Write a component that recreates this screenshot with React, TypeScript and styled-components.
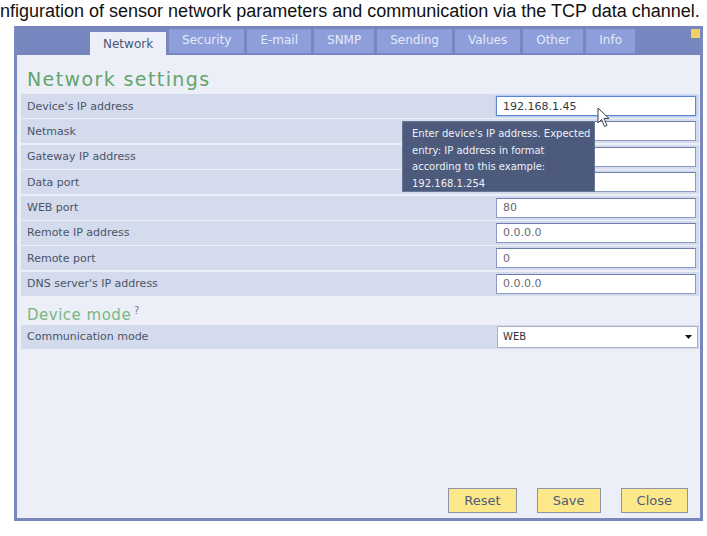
import styled, { createGlobalStyle } from "styled-components";

const GlobalStyle = createGlobalStyle`
  body {
    margin: 0;
    background: #ffffff;
  }
`;

const Page = styled.div`
  width: 707px;
  height: 536px;
  overflow: hidden;
`;

const Caption = styled.div`
  height: 26px;
  margin-left: -23px;
  box-sizing: border-box;
  font-family: "Liberation Sans", Arial, sans-serif;
  font-size: 18px;
  line-height: 22px;
  color: #111;
  white-space: nowrap;
`;

const Panel = styled.div`
  position: relative;
  margin-left: 14px;
  width: 689px;
  height: 495px;
  box-sizing: border-box;
  border: 3px solid #7b88bd;
  border-top: none;
  display: flex;
  flex-direction: column;
  font-family: "DejaVu Sans", Verdana, sans-serif;
`;

const TabBar = styled.div`
  height: 29px;
  flex: none;
  background: #7886c0;
  display: flex;
  align-items: flex-end;
  gap: 3px;
  padding-left: 73px;
`;

const Tab = styled.div<{ $active?: boolean }>`
  height: ${(p) => (p.$active ? "23px" : "24px")};
  line-height: ${(p) => (p.$active ? "24px" : "23px")};
  margin-bottom: ${(p) => (p.$active ? "0" : "2px")};
  padding: 0 13px;
  font-size: 12px;
  background: ${(p) => (p.$active ? "#eceef8" : "#8d9edb")};
  color: ${(p) => (p.$active ? "#4a5878" : "#e4eafa")};
`;

const CornerMark = styled.div`
  width: 9px;
  height: 9px;
  margin-left: auto;
  align-self: flex-start;
  margin-top: 3px;
  background: #f1d165;
`;

const Content = styled.div`
  flex: 1;
  background: #eceef8;
  padding: 0 1px 5px 4px;
  display: flex;
  flex-direction: column;
`;

const Heading = styled.h2`
  margin: 0;
  padding: 11px 0 2px 6px;
  font-size: 19px;
  line-height: 26px;
  font-weight: normal;
  letter-spacing: 1.4px;
  color: #63a56d;
`;

const SubHeading = styled.h3`
  margin: 0;
  padding-left: 6px;
  height: 29px;
  font-size: 15px;
  line-height: 29px;
  font-weight: normal;
  letter-spacing: 0.5px;
  color: #78b882;
`;

const Hint = styled.sup`
  font-size: 10px;
  color: #7d8494;
  margin-left: 3px;
  letter-spacing: 0;
`;

const FieldList = styled.div`
  display: flex;
  flex-direction: column;
  gap: 1.4px;
`;

const Row = styled.div`
  height: 24px;
  background: #d3dbec;
  display: flex;
  align-items: center;
  justify-content: space-between;
  padding-left: 6px;
`;

const Label = styled.span`
  font-size: 11px;
  color: #4a5468;
`;

const Field = styled.input<{ $focused?: boolean }>`
  width: 200px;
  height: 20px;
  margin-right: 3px;
  box-sizing: border-box;
  padding: 0 6px;
  font-family: "DejaVu Sans", Verdana, sans-serif;
  font-size: 11px;
  color: ${(p) => (p.$focused ? "#333a48" : "#666c78")};
  background: #ffffff;
  border: 1px solid ${(p) => (p.$focused ? "#5b84d4" : "#8d9ac6")};
  border-top-color: ${(p) => (p.$focused ? "#5b84d4" : "#6f7dab")};
  box-shadow: ${(p) => (p.$focused ? "0 0 2px #8fb2ef" : "none")};
  outline: none;
`;

const SelectBox = styled.div`
  width: 201px;
  height: 22px;
  margin-right: 1px;
  box-sizing: border-box;
  background: #ffffff;
  border: 1px solid #a9b1c8;
  display: flex;
  align-items: center;
  justify-content: space-between;
  padding: 0 5px 0 5px;
  font-size: 10px;
  color: #2f3440;
`;

const Actions = styled.div`
  margin-top: auto;
  display: flex;
  justify-content: flex-end;
  gap: 20px;
  padding-right: 11px;
`;

const Button = styled.button`
  height: 25px;
  padding: 0 15px;
  box-sizing: border-box;
  background: #fde889;
  border: 1px solid #8f94a6;
  font-family: "DejaVu Sans", Verdana, sans-serif;
  font-size: 13px;
  color: #505b78;
`;

const Tooltip = styled.div`
  position: absolute;
  left: 385px;
  top: 95px;
  width: 193px;
  height: 71px;
  box-sizing: border-box;
  padding: 4px 9px;
  background: #4c5a7b;
  border: 1px solid #6b7798;
  color: #eef1f8;
  font-size: 10px;
  line-height: 16.5px;
  white-space: nowrap;
`;

const Pointer = styled.svg`
  position: absolute;
  left: 580px;
  top: 81px;
`;

const tabs = ["Network", "Security", "E-mail", "SNMP", "Sending", "Values", "Other", "Info"];

const network = [
  { label: "Device's IP address", value: "192.168.1.45", focused: true },
  { label: "Netmask", value: "255.255.255.0" },
  { label: "Gateway IP address", value: "192.168.1.1" },
  { label: "Data port", value: "10001" },
  { label: "WEB port", value: "80" },
  { label: "Remote IP address", value: "0.0.0.0" },
  { label: "Remote port", value: "0" },
  { label: "DNS server's IP address", value: "0.0.0.0" },
];

export default function App() {
  return (
    <Page>
      <GlobalStyle />
      <Caption>
        Configuration of sensor network parameters and communication via the TCP data channel.
      </Caption>
      <Panel>
        <TabBar>
          {tabs.map((t) => (
            <Tab key={t} $active={t === "Network"}>
              {t}
            </Tab>
          ))}
          <CornerMark />
        </TabBar>
        <Content>
          <Heading>Network settings</Heading>
          <FieldList>
            {network.map((f) => (
              <Row key={f.label}>
                <Label>{f.label}</Label>
                <Field $focused={f.focused} defaultValue={f.value} />
              </Row>
            ))}
          </FieldList>
          <SubHeading>
            Device mode<Hint>?</Hint>
          </SubHeading>
          <FieldList>
            <Row>
              <Label>Communication mode</Label>
              <SelectBox>
                WEB
                <svg width="7" height="4" viewBox="0 0 7 4">
                  <path d="M0 0 L7 0 L3.5 4 Z" fill="#111" />
                </svg>
              </SelectBox>
            </Row>
          </FieldList>
          <Actions>
            <Button>Reset</Button>
            <Button>Save</Button>
            <Button>Close</Button>
          </Actions>
        </Content>
        <Tooltip>
          Enter device's IP address. Expected
          <br />
          entry: IP address in format
          <br />
          according to this example:
          <br />
          192.168.1.254
        </Tooltip>
        <Pointer width="14" height="21" viewBox="0 0 14 21">
          <path
            d="M1 1 L1 16 L4.5 12.5 L7.5 19.5 L10 18.5 L7 11.5 L12 11.5 Z"
            fill="#ffffff"
            stroke="#3a3f4a"
            strokeWidth="1"
            strokeLinejoin="round"
          />
        </Pointer>
      </Panel>
    </Page>
  );
}
